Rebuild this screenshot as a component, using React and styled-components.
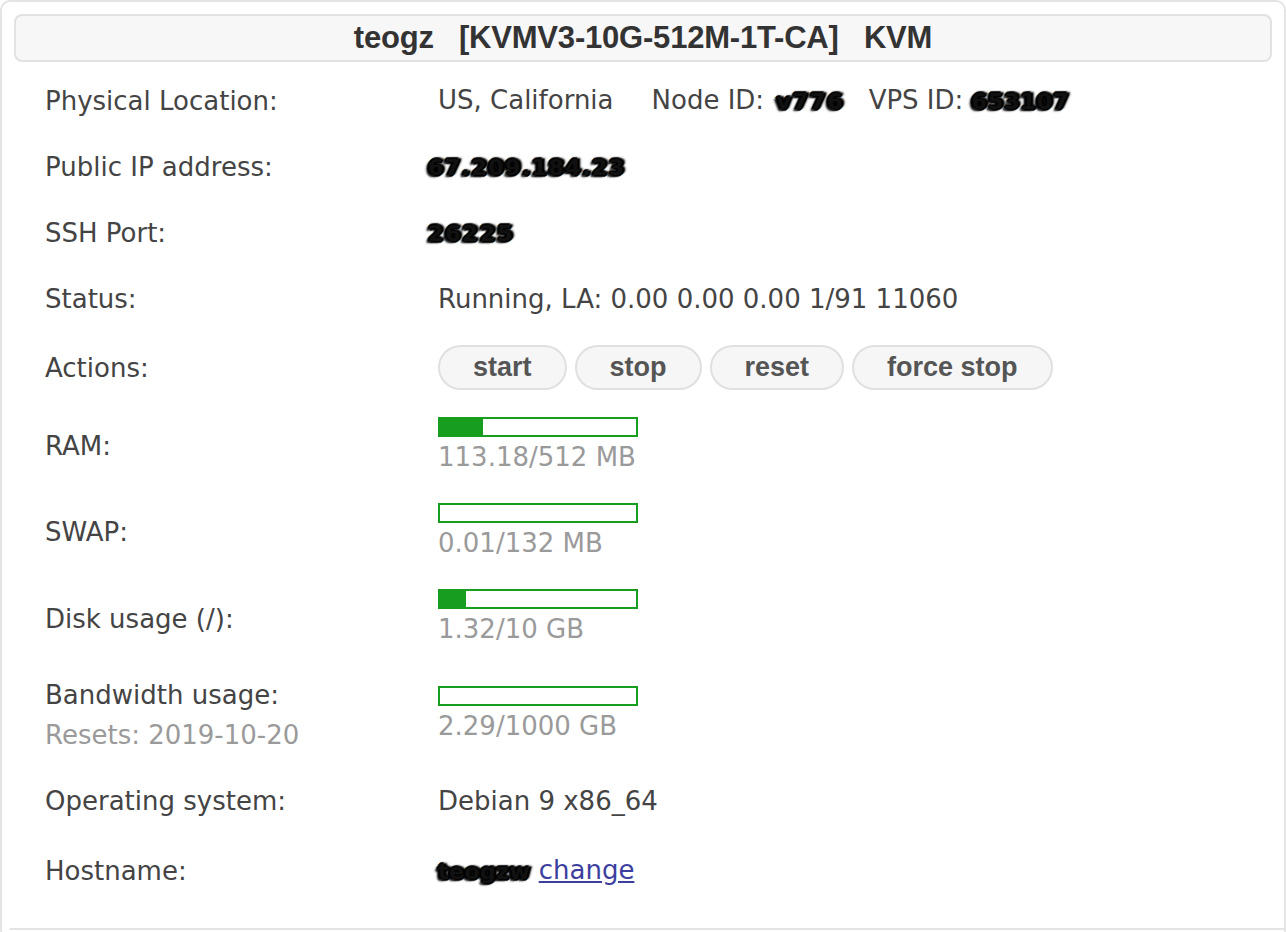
import React from "react";
import styled, { createGlobalStyle } from "styled-components";

const GlobalStyle = createGlobalStyle`
	body {
		margin: 0;
		background: #fff;
		font-family: "DejaVu Sans", Verdana, sans-serif;
		color: #444;
	}
`;

const rows = [
	{ label: "Physical Location:", kind: "location", h: 66 },
	{ label: "Public IP address:", kind: "ip", h: 66 },
	{ label: "SSH Port:", kind: "ssh", h: 66 },
	{ label: "Status:", kind: "status", h: 66 },
	{ label: "Actions:", kind: "actions", h: 71 },
	{ label: "RAM:", kind: "bar", used: 113.18, total: 512, text: "113.18/512 MB", h: 86 },
	{ label: "SWAP:", kind: "bar", used: 0.01, total: 132, text: "0.01/132 MB", h: 86 },
	{ label: "Disk usage (/):", kind: "bar", used: 1.32, total: 10, text: "1.32/10 GB", h: 87 },
	{ label: "Bandwidth usage:", sub: "Resets: 2019-10-20", kind: "bar", used: 2.29, total: 1000, text: "2.29/1000 GB", h: 106 },
	{ label: "Operating system:", kind: "os", h: 66 },
	{ label: "Hostname:", kind: "host", h: 74 },
];

export default function App() {
	const renderValue = row => {
		switch (row.kind) {
			case "location":
				return (
					<Inline>
						<span>US, California</span>
						<span>
							Node ID: <Redacted $gap={4} $ls={2}>v776</Redacted>
						</span>
						<span>
							VPS ID: <Redacted $ls={1}>653107</Redacted>
						</span>
					</Inline>
				);
			case "ip":
				return (
					<Redacted $shift $ls={1.5}>
						67.209.184.23
					</Redacted>
				);
			case "ssh":
				return (
					<Redacted $shift $ls={2}>
						26225
					</Redacted>
				);
			case "status":
				return <span>Running, LA: 0.00 0.00 0.00 1/91 11060</span>;
			case "actions":
				return (
					<Buttons>
						<Button>start</Button>
						<Button>stop</Button>
						<Button>reset</Button>
						<Button>force stop</Button>
					</Buttons>
				);
			case "bar": {
				// tiny values don't show in the bar
				const raw = (row.used / row.total) * 100;
				const pct = raw < 1 ? 0 : Math.min(100, raw);
				return (
					<Usage>
						<Bar>
							<Fill style={{ width: `${pct}%` }} />
						</Bar>
						<Muted>{row.text}</Muted>
					</Usage>
				);
			}
			case "os":
				return <span>Debian 9 x86_64</span>;
			case "host":
				return (
					<span>
						<Redacted $ls={0.5}>teogzw</Redacted> <Link href="#">change</Link>
					</span>
				);
			default:
				return null;
		}
	};

	return (
		<>
			<GlobalStyle />
			<Panel>
				<Header>
					<Title>{"teogz   [KVMV3-10G-512M-1T-CA]   KVM"}</Title>
				</Header>
				<Table>
					{rows.map(row => (
						<Row key={row.label} $h={row.h}>
							<Label>
								<span>{row.label}</span>
								{row.sub && <Muted>{row.sub}</Muted>}
							</Label>
							<Value>{renderValue(row)}</Value>
						</Row>
					))}
				</Table>
				<Divider />
			</Panel>
		</>
	);
}

const Panel = styled.div`
	box-sizing: border-box;
	width: 1286px;
	min-height: 940px;
	border: 2px solid #e4e4e4;
	border-radius: 10px;
	padding: 12px 12px 0 12px;
`;

const Header = styled.div`
	box-sizing: border-box;
	height: 48px;
	border: 2px solid #e2e2e2;
	border-radius: 8px;
	background: #f7f7f7;
	display: flex;
	align-items: center;
	justify-content: center;
`;

const Title = styled.h1`
	margin: 0;
	font-family: "Liberation Sans", Arial, sans-serif;
	font-weight: bold;
	font-size: 31px;
	color: #333;
	white-space: pre;
	letter-spacing: -0.2px;
`;

const Table = styled.div`
	margin-top: 6px;
	padding-left: 31px;
`;

const Row = styled.div`
	display: grid;
	grid-template-columns: 393px 1fr;
	align-items: center;
	height: ${p => p.$h}px;
	font-size: 26px;
	line-height: 30px;
`;

const Label = styled.div`
	display: flex;
	flex-direction: column;
	gap: 10px;
`;

const Value = styled.div``;

const Inline = styled.div`
	display: flex;
	gap: 24px;

	& > :first-child {
		margin-right: 14px;
	}
`;

const Redacted = styled.span`
	display: inline-block;
	white-space: nowrap;
	color: #111;
	font-size: 22px;
	font-weight: bold;
	letter-spacing: ${p => p.$ls || 0}px;
	margin-left: ${p => (p.$shift ? "-10px" : `${p.$gap || 0}px`)};
	text-shadow: 1px 1px 0 #000, -1px -1px 0 #000, 2px 0 1px #000, -2px 0 1px #000,
		0 2px 1px #222, 0 -2px 1px #222, 3px -1px 2px #111, -3px 2px 2px #111;
`;

const Buttons = styled.div`
	display: flex;
	gap: 8px;
`;

const Button = styled.button`
	box-sizing: border-box;
	height: 45px;
	padding: 0 33px;
	border: 2px solid #e0e0e0;
	border-radius: 23px;
	background: #f6f6f6;
	font-family: "Liberation Sans", Arial, sans-serif;
	font-weight: bold;
	font-size: 27px;
	color: #555;
	cursor: pointer;
`;

const Usage = styled.div`
	display: flex;
	flex-direction: column;
	gap: 5px;
	margin-top: -4px;
`;

const Bar = styled.div`
	box-sizing: border-box;
	width: 200px;
	height: 20px;
	border: 2px solid #189e1e;
	background: #fff;
`;

const Fill = styled.div`
	height: 100%;
	background: #189e1e;
`;

const Muted = styled.span`
	color: #9a9a9a;
`;

const Link = styled.a`
	color: #3c3f9e;
	text-decoration: underline;
`;

const Divider = styled.div`
	margin: 20px -14px 0 -5px;
	height: 2px;
	background: #e4e4e4;
	border-radius: 2px 0 0 0;
`;
